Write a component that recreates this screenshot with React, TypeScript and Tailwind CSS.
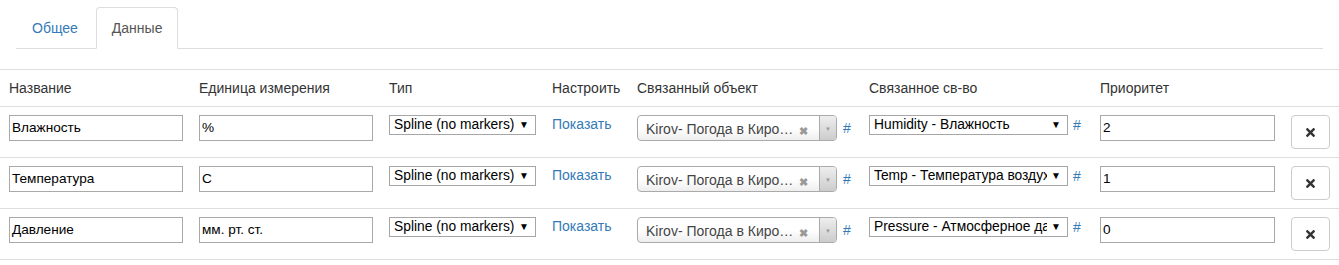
import { FaTimes } from 'react-icons/fa';

type Row = {
  name: string;
  unit: string;
  prop: string;
  priority: string;
};

const rows: Row[] = [
  { name: 'Влажность', unit: '%', prop: 'Humidity - Влажность', priority: '2' },
  { name: 'Температура', unit: 'C', prop: 'Temp - Температура воздуха', priority: '1' },
  { name: 'Давление', unit: 'мм. рт. ст.', prop: 'Pressure - Атмосферное давление', priority: '0' },
];

const cols = 'grid grid-cols-[191px_190px_163px_85px_232px_231px_191px_1fr]';

const TextBox = ({ value, width }: { value: string; width: string }) => (
  <div className={`${width} h-[26px] border border-[#a9a9a9] bg-white px-[2px] flex items-center text-[13.6px] text-black`}>
    {value}
  </div>
);

const NativeSelect = ({ value, width }: { value: string; width: string }) => (
  <div className={`${width} h-5 border border-[#a6a6a6] bg-white flex items-center pl-[4px] pr-[6px] text-[13.8px] text-black`}>
    <span className="flex-1 min-w-0 overflow-hidden whitespace-nowrap">{value}</span>
    <span className="text-[10px] ml-[4px] leading-none">▼</span>
  </div>
);

const Select2Box = () => (
  <div className="w-[200px] h-[26px] rounded-[4px] border border-[#aaa] flex bg-gradient-to-b from-white from-50% to-[#eee] overflow-hidden">
    <div className="flex-1 flex items-center pl-2 pr-1 text-[14px] text-[#444] pt-[2px] min-w-0">
      <span className="whitespace-nowrap">Kirov- Погода в Киро…</span>
      <span className="ml-auto mr-[7px] text-[#999] text-[11px] font-bold mt-[3px]">✖</span>
    </div>
    <div className="w-[17px] border-l border-[#aaa] bg-gradient-to-b from-[#eee] to-[#ccc] flex items-center justify-center">
      <span className="text-[#999] text-[6px] mt-[2px]">▼</span>
    </div>
  </div>
);

const App = () => {
  return (
    <div className="w-[1339px] h-[265px] bg-white text-[14px] text-[#333] font-['Liberation_Sans',Arial,sans-serif] leading-5">
      <div className="pt-[7px] px-4">
        <ul className="flex border-b border-[#ddd]">
          <li className="-mb-px mr-[2px]">
            <a className="block px-[15px] py-[10px] border border-transparent rounded-t-[4px] text-[#337ab7]">Общее</a>
          </li>
          <li className="-mb-px">
            <a className="block px-[15px] py-[10px] border border-[#ddd] border-b-white rounded-t-[4px] bg-white text-[#555]">Данные</a>
          </li>
        </ul>
      </div>

      <div className="mt-5 border-t border-[#ddd]">
        <div className={`${cols} border-b border-[#ddd]`}>
          <div className="pl-[9px] py-2">Название</div>
          <div className="pl-2 py-2">Единица измерения</div>
          <div className="pl-2 py-2">Тип</div>
          <div className="pl-2 py-2">Настроить</div>
          <div className="pl-2 py-2">Связанный объект</div>
          <div className="pl-2 py-2">Связанное св-во</div>
          <div className="pl-2 py-2">Приоритет</div>
          <div />
        </div>

        {rows.map((r) => (
          <div key={r.name} className={`${cols} h-[51px] border-b border-[#ddd]`}>
            <div className="pl-[9px] pt-2">
              <TextBox value={r.name} width="w-[174px]" />
            </div>
            <div className="pl-2 pt-2">
              <TextBox value={r.unit} width="w-[174px]" />
            </div>
            <div className="pl-2 pt-2">
              <NativeSelect value="Spline (no markers)" width="w-[147px]" />
            </div>
            <div className="pl-2 pt-[7px]">
              <a className="text-[#337ab7]">Показать</a>
            </div>
            <div className="pl-2 pt-2 flex items-start">
              <Select2Box />
              <span className="ml-[6px] mt-[3px] text-[#337ab7]">#</span>
            </div>
            <div className="pl-2 pt-2 flex items-start">
              <NativeSelect value={r.prop} width="w-[199px]" />
              <span className="ml-[5px] text-[#337ab7]">#</span>
            </div>
            <div className="pl-2 pt-2">
              <TextBox value={r.priority} width="w-[175px]" />
            </div>
            <div className="pl-2 pt-2">
              <button className="w-[39px] h-[34px] border border-[#ccc] rounded-[4px] bg-white flex items-center justify-center">
                <FaTimes className="w-[13px] h-[13px] text-[#333]" />
              </button>
            </div>
          </div>
        ))}
      </div>
    </div>
  );
};

export default App;
